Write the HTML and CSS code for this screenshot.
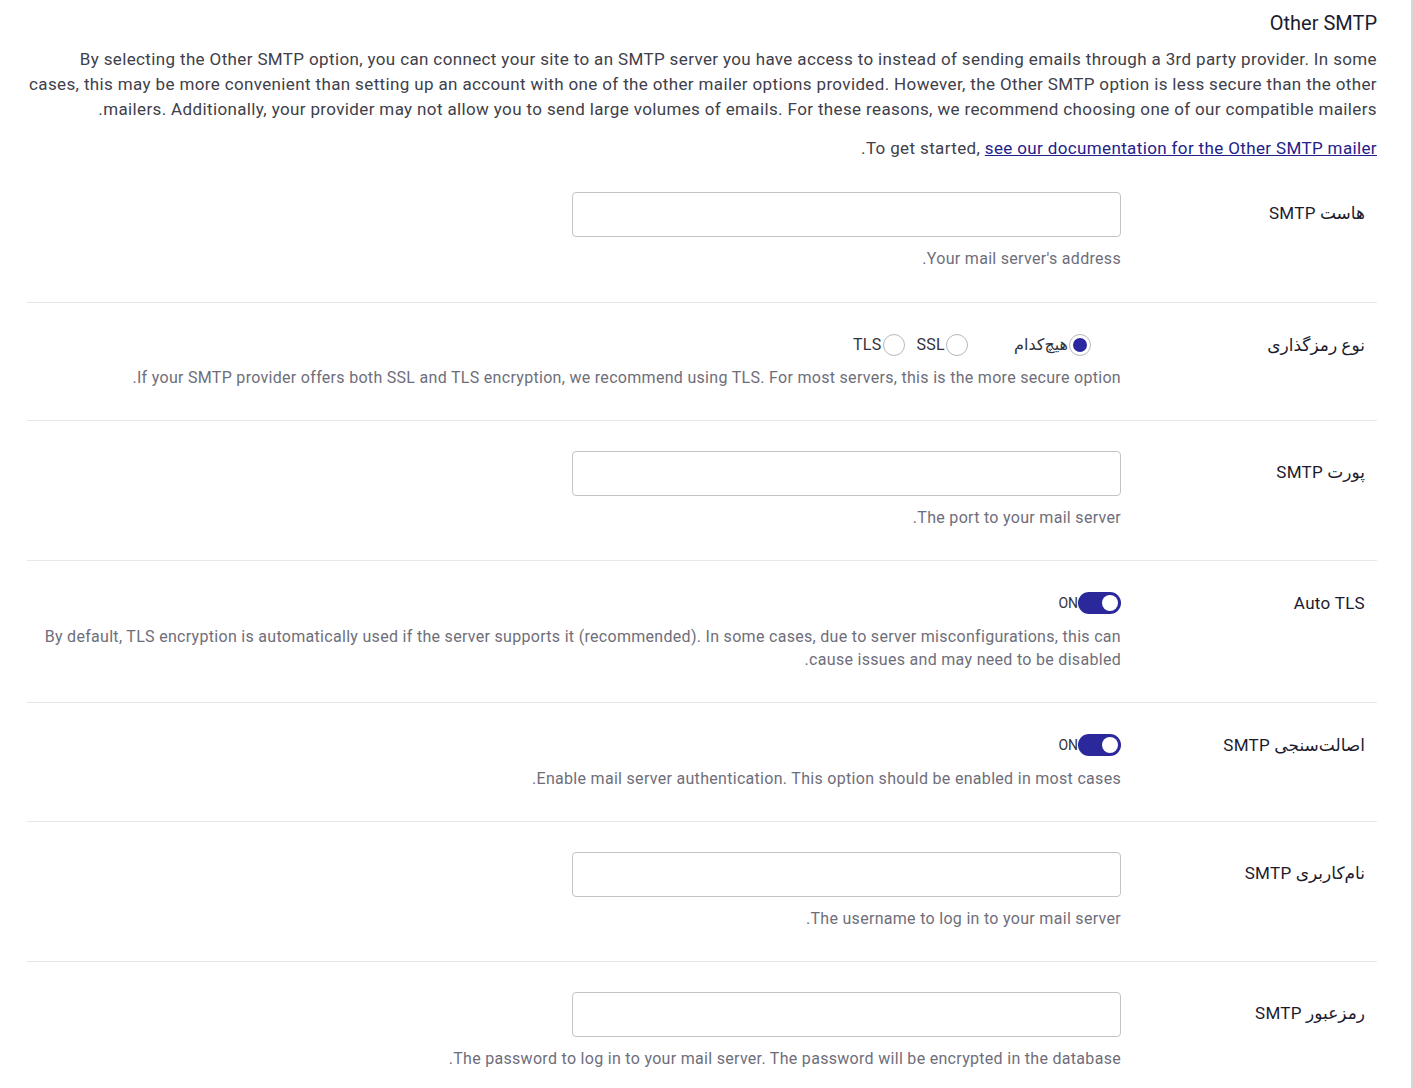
FILE: index.html
```html
<!DOCTYPE html>
<html lang="fa" dir="rtl">
<head>
    <meta charset="utf-8">
    <title>Other SMTP</title>
    <link rel="stylesheet" href="styles.css">
</head>
<body>
    <div class="page">
        <section class="mailer">
            <h2 class="mailer-title">Other SMTP</h2>
            <p class="mailer-intro">By selecting the Other SMTP option, you can connect your site to an SMTP server you have access to instead of sending emails through a 3rd party provider. In some cases, this may be more convenient than setting up an account with one of the other mailer options provided. However, the Other SMTP option is less secure than the other mailers. Additionally, your provider may not allow you to send large volumes of emails. For these reasons, we recommend choosing one of our compatible mailers.</p>
            <p class="mailer-intro mailer-docs">To get started, <a href="#">see our documentation for the Other SMTP mailer</a>.</p>

            <div class="setting-row first">
                <label class="setting-label for-input">هاست SMTP</label>
                <div class="setting-field">
                    <input class="text-input" type="text">
                    <p class="desc">Your mail server's address.</p>
                </div>
            </div>

            <div class="setting-row">
                <label class="setting-label for-inline">نوع رمزگذاری</label>
                <div class="setting-field">
                    <div class="radio-group">
                        <label class="radio wide"><span class="radio-dot checked"></span>هیچ‌کدام</label>
                        <label class="radio"><span class="radio-dot"></span>SSL</label>
                        <label class="radio"><span class="radio-dot"></span>TLS</label>
                    </div>
                    <p class="desc">If your SMTP provider offers both SSL and TLS encryption, we recommend using TLS. For most servers, this is the more secure option.</p>
                </div>
            </div>

            <div class="setting-row">
                <label class="setting-label for-input">پورت SMTP</label>
                <div class="setting-field">
                    <input class="text-input" type="text">
                    <p class="desc">The port to your mail server.</p>
                </div>
            </div>

            <div class="setting-row">
                <label class="setting-label for-inline">Auto TLS</label>
                <div class="setting-field">
                    <div class="toggle-line">
                        <span class="toggle"><span class="knob"></span></span>
                        <span class="toggle-text">ON</span>
                    </div>
                    <p class="desc">By default, TLS encryption is automatically used if the server supports it (recommended). In some cases, due to server misconfigurations, this can cause issues and may need to be disabled.</p>
                </div>
            </div>

            <div class="setting-row">
                <label class="setting-label for-inline">اصالت‌سنجی SMTP</label>
                <div class="setting-field">
                    <div class="toggle-line">
                        <span class="toggle"><span class="knob"></span></span>
                        <span class="toggle-text">ON</span>
                    </div>
                    <p class="desc">Enable mail server authentication. This option should be enabled in most cases.</p>
                </div>
            </div>

            <div class="setting-row">
                <label class="setting-label for-input">نام‌کاربری SMTP</label>
                <div class="setting-field">
                    <input class="text-input" type="text">
                    <p class="desc">The username to log in to your mail server.</p>
                </div>
            </div>

            <div class="setting-row">
                <label class="setting-label for-input">رمزعبور SMTP</label>
                <div class="setting-field">
                    <input class="text-input" type="password">
                    <p class="desc">The password to log in to your mail server. The password will be encrypted in the database.</p>
                </div>
            </div>
        </section>
    </div>
</body>
</html>
```

FILE: styles.css
```css
html, body {
    margin: 0;
    padding: 0;
    background-color: #fff;
}

body {
    font-family: Roboto, "DejaVu Sans", sans-serif;
    color: #3c3c44;
    overflow: hidden;
}

.page {
    width: 1413px;
    min-height: 1088px;
    box-sizing: border-box;
    padding: 0 36px 0 27px;
    direction: rtl;
    box-shadow: inset -2px 0 0 #d6d6d6; /* edge line on the right */
}

.mailer-title {
    margin: 0;
    padding-top: 10px;
    font-size: 20px;
    line-height: 26px;
    font-weight: 400;
    color: #1c1b2e;
}

.mailer-intro {
    margin: 11px 0 0;
    font-size: 17px;
    line-height: 25px;
    letter-spacing: 0.365px;
    color: #40404a;
}

.mailer-docs {
    margin-top: 14px;
}

.mailer-docs a {
    color: #23208a;
    text-decoration: underline;
}

.setting-row {
    display: flex;
    padding: 30px 0 31px;
    border-bottom: 1px solid #e8e8ea;
}

.setting-row.first {
    padding-top: 31px;
    padding-bottom: 32px;
}

.setting-row:last-child {
    border-bottom: none;
}

.setting-label {
    width: 256px;
    flex-shrink: 0;
    box-sizing: border-box;
    padding-right: 12px;
    font-size: 17px;
    line-height: 24px;
    letter-spacing: 0.3px;
    color: #1c1b2e;
}

.setting-label.for-input {
    padding-top: 9px;
}

.setting-field {
    flex: 1;
}

.text-input {
    display: block;
    width: 549px;
    height: 45px;
    box-sizing: border-box;
    border: 1px solid #c4c4c8;
    border-radius: 4px;
    background: #fff;
    margin: 0;
}

.desc {
    margin: 10px 0 0;
    font-size: 16px;
    line-height: 23px;
    letter-spacing: 0.3px;
    color: #6e6e7a;
}

.radio-group {
    display: flex;
    height: 23px;
    align-items: center;
    padding-right: 30px;
}

.radio {
    display: flex;
    align-items: center;
    font-size: 16px;
    letter-spacing: 0.3px;
    color: #33333d;
    margin-left: 12px;
}

.radio.wide {
    margin-left: 46px;
}

.radio-dot {
    width: 22px;
    height: 22px;
    border: 1px solid #b8b8be;
    border-radius: 50%;
    box-sizing: border-box;
    background: #fff;
    margin-left: 1px;
    position: relative;
}

.radio-dot.checked::after {
    content: "";
    position: absolute;
    top: 3px;
    left: 3px;
    width: 14px;
    height: 14px;
    border-radius: 50%;
    background: #2b27a0;
}

.toggle-line {
    display: flex;
    align-items: center;
    height: 24px;
}

.toggle {
    width: 43px;
    height: 22px;
    border-radius: 11px;
    background: #2b289c;
    position: relative;
}

.knob {
    position: absolute;
    top: 3px;
    right: 3px;
    width: 16px;
    height: 16px;
    border-radius: 50%;
    background: #fff;
}

.toggle-text {
    font-size: 14px;
    color: #33333d;
    margin-left: 1px;
}
```
